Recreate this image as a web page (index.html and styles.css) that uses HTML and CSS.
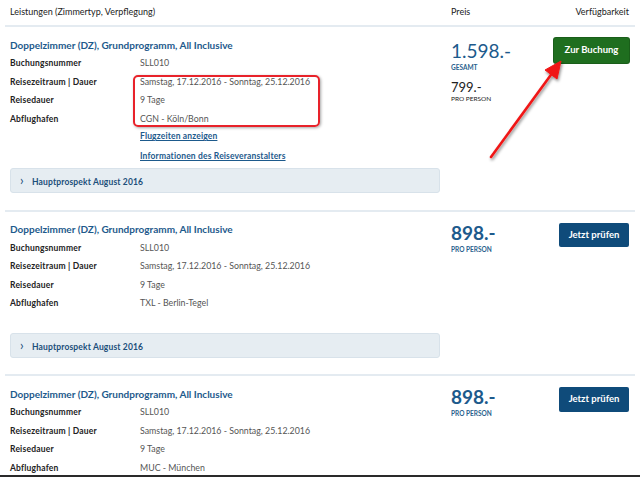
FILE: index.html
```html
<!DOCTYPE html>
<html>
	<head>
		<title>Angebote</title>
		<meta charset="utf-8">
		<link rel="stylesheet" href="styles.css">
	</head>

	<body>
		<div class="page">
			<div class="head">
				<span>Leistungen (Zimmertyp, Verpflegung)</span>
				<span>Preis</span>
				<span class="avail">Verfügbarkeit</span>
			</div>

			<div class="offer">
				<div class="info">
					<h3 class="title">Doppelzimmer (DZ), Grundprogramm, All Inclusive</h3>
					<div class="facts">
						<span class="label">Buchungsnummer</span><span class="value">SLL010</span>
						<span class="label">Reisezeitraum | Dauer</span><span class="value">Samstag, 17.12.2016 - Sonntag, 25.12.2016</span>
						<span class="label">Reisedauer</span><span class="value">9 Tage</span>
						<span class="label">Abflughafen</span><span class="value">CGN - Köln/Bonn</span>
					</div>
					<div class="links">
						<a href="#">Flugzeiten anzeigen</a>
						<a href="#">Informationen des Reiseveranstalters</a>
					</div>
					<div class="prospect"><span class="chev">›</span>Hauptprospekt August 2016</div>
				</div>
				<div class="price first">
					<div class="amount">1.598.-</div>
					<div class="tag">GESAMT</div>
					<div class="amount small">799.-</div>
					<div class="tag dark">PRO PERSON</div>
				</div>
				<div class="action"><a class="btn book" href="#">Zur Buchung</a></div>
			</div>

			<div class="offer">
				<div class="info">
					<h3 class="title">Doppelzimmer (DZ), Grundprogramm, All Inclusive</h3>
					<div class="facts">
						<span class="label">Buchungsnummer</span><span class="value">SLL010</span>
						<span class="label">Reisezeitraum | Dauer</span><span class="value">Samstag, 17.12.2016 - Sonntag, 25.12.2016</span>
						<span class="label">Reisedauer</span><span class="value">9 Tage</span>
						<span class="label">Abflughafen</span><span class="value">TXL - Berlin-Tegel</span>
					</div>
					<div class="prospect spaced"><span class="chev">›</span>Hauptprospekt August 2016</div>
				</div>
				<div class="price">
					<div class="amount strong">898.-</div>
					<div class="tag">PRO PERSON</div>
				</div>
				<div class="action"><a class="btn check" href="#">Jetzt prüfen</a></div>
			</div>

			<div class="offer">
				<div class="info">
					<h3 class="title">Doppelzimmer (DZ), Grundprogramm, All Inclusive</h3>
					<div class="facts">
						<span class="label">Buchungsnummer</span><span class="value">SLL010</span>
						<span class="label">Reisezeitraum | Dauer</span><span class="value">Samstag, 17.12.2016 - Sonntag, 25.12.2016</span>
						<span class="label">Reisedauer</span><span class="value">9 Tage</span>
						<span class="label">Abflughafen</span><span class="value">MUC - München</span>
					</div>
				</div>
				<div class="price">
					<div class="amount strong">898.-</div>
					<div class="tag">PRO PERSON</div>
				</div>
				<div class="action"><a class="btn check" href="#">Jetzt prüfen</a></div>
			</div>

			<!-- annotations drawn over the screenshot -->
			<div class="mark-box"></div>
			<svg class="mark-arrow" width="640" height="200" viewBox="0 0 640 200">
				<defs>
					<filter id="sh" x="-20%" y="-20%" width="140%" height="140%">
						<feDropShadow dx="1" dy="2" stdDeviation="1.5" flood-color="#000" flood-opacity="0.45"/>
					</filter>
				</defs>
				<g filter="url(#sh)" fill="#f01818" stroke="#f01818">
					<line x1="491" y1="157" x2="553" y2="72" stroke-width="2.6" stroke-linecap="round"/>
					<polygon points="561,61 557,79 545,70" stroke-width="1" stroke-linejoin="round"/>
				</g>
			</svg>
		</div>
		<div class="frame-edge"></div>
	</body>
</html>
```

FILE: styles.css
```css
html,body {
	margin: 0;
	padding: 0;
	background-color: #fff;
	overflow: hidden;
}

body {
	font-family: 'Lato', 'Liberation Sans', sans-serif;
	color: #222;
}

.page {
	position: relative;
}

.head {
	display: grid;
	grid-template-columns: 430px 1fr auto;
	column-gap: 11px;
	height: 25px;
	line-height: 24px;
	padding: 0 11px 0 10px;
	font-size: 9px;
	color: #222;
}

.offer {
	display: grid;
	grid-template-columns: 430px 1fr auto;
	column-gap: 11px;
	margin: 0 5px;
	padding: 8.5px 6px 16.5px 5px;
	border-top: 2px solid #e4ebf1;
}

.title {
	margin: 0;
	font-size: 10px;
	line-height: 18.5px;
	font-weight: 700;
	color: #1d5a8c;
}

.facts {
	display: grid;
	grid-template-columns: 130px 1fr;
	line-height: 18.5px;
	font-size: 8.5px;
}

.label {
	font-weight: 700;
	letter-spacing: 0.2px;
	color: #222;
}

.value {
	font-size: 8.8px;
	color: #555;
}

.links {
	display: flex;
	flex-direction: column;
	align-items: flex-start;
	gap: 4px;
	margin-left: 130px;
	line-height: 16px;
}

.links a {
	font-size: 8.5px;
	font-weight: 700;
	letter-spacing: 0.15px;
	color: #1d5a8c;
	text-decoration: underline;
}

.prospect {
	margin-top: 4px;
	height: 23px;
	line-height: 23px;
	padding-left: 9px;
	background-color: #e6edf2;
	border: 1px solid #d8e2ea;
	border-radius: 3px;
	font-size: 8.5px;
	font-weight: 700;
	letter-spacing: 0.15px;
	color: #1b4f7a;
}

.prospect.spaced {
	margin-top: 20px;
}

.chev {
	display: inline-block;
	width: 12px;
	font-size: 13px;
	font-weight: 400;
}

.price {
	padding-top: 2.5px;
}

.price.first {
	padding-top: 5px;
}

.amount {
	font-size: 19px;
	line-height: 20px;
	color: #1d5a8c;
}

.amount.strong {
	font-weight: 700;
}

.amount.small {
	margin-top: 7.5px;
	font-size: 13px;
	line-height: 14px;
	color: #222;
}

.tag {
	margin-top: 2px;
	font-size: 6.5px;
	line-height: 10px;
	font-weight: 700;
	color: #2a5f8d;
}

.tag.dark {
	margin-top: 0;
	font-weight: 400;
	color: #222;
}

.btn {
	display: block;
	margin-top: 2.5px;
	height: 24.5px;
	line-height: 24.5px;
	border-radius: 2px;
	text-align: center;
	font-size: 9.5px;
	font-weight: 700;
	color: #fff;
	text-decoration: none;
}

.btn.book {
	width: 75px;
	background-color: #1f6e1f;
	box-shadow: 0 0 0 1px #1a5e1a;
}

.btn.check {
	width: 70px;
	background-color: #0f4b7a;
}

.mark-box {
	position: absolute;
	left: 133px;
	top: 75px;
	width: 183px;
	height: 48px;
	border: 2px solid #e8222a;
	border-radius: 5px;
	box-shadow: 1px 1px 3px rgba(0,0,0,0.35);
}

.mark-arrow {
	position: absolute;
	left: 0;
	top: 0;
}

.frame-edge {
	position: fixed;
	left: 0;
	right: 0;
	bottom: 0;
	height: 2px;
	background-color: #2a2a2a;
}
```
